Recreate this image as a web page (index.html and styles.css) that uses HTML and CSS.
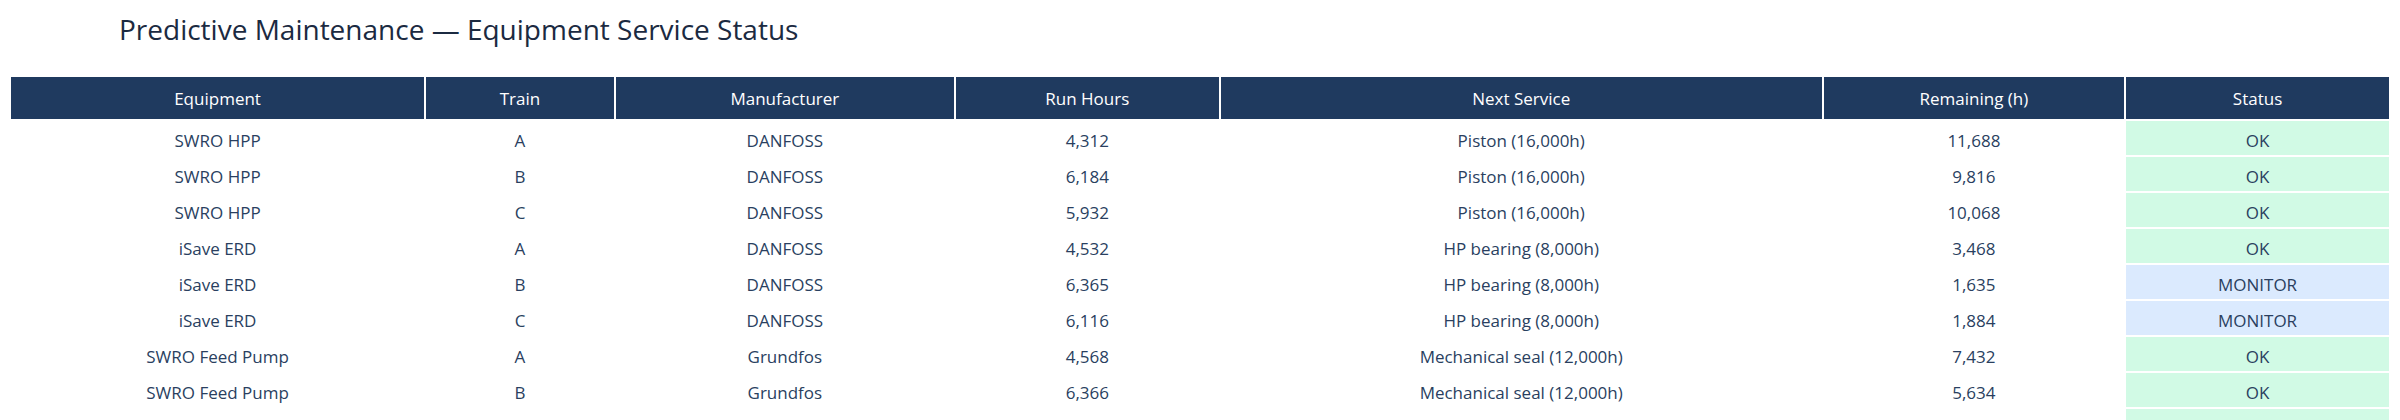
FILE: index.html
```html
<!DOCTYPE html>
<html lang="en">
<head>
<meta charset="utf-8">
<title>Predictive Maintenance — Equipment Service Status</title>
<link rel="stylesheet" href="styles.css">
</head>
<body>
<div class="page">
  <h1 class="title">Predictive Maintenance — Equipment Service Status</h1>
  <div class="table">
    <div class="th">Equipment</div>
    <div class="th">Train</div>
    <div class="th">Manufacturer</div>
    <div class="th">Run Hours</div>
    <div class="th">Next Service</div>
    <div class="th">Remaining (h)</div>
    <div class="th">Status</div>

    <div class="td">SWRO HPP</div><div class="td">A</div><div class="td">DANFOSS</div><div class="td">4,312</div><div class="td">Piston (16,000h)</div><div class="td">11,688</div><div class="td ok">OK</div>
    <div class="td">SWRO HPP</div><div class="td">B</div><div class="td">DANFOSS</div><div class="td">6,184</div><div class="td">Piston (16,000h)</div><div class="td">9,816</div><div class="td ok">OK</div>
    <div class="td">SWRO HPP</div><div class="td">C</div><div class="td">DANFOSS</div><div class="td">5,932</div><div class="td">Piston (16,000h)</div><div class="td">10,068</div><div class="td ok">OK</div>
    <div class="td">iSave ERD</div><div class="td">A</div><div class="td">DANFOSS</div><div class="td">4,532</div><div class="td">HP bearing (8,000h)</div><div class="td">3,468</div><div class="td ok">OK</div>
    <div class="td">iSave ERD</div><div class="td">B</div><div class="td">DANFOSS</div><div class="td">6,365</div><div class="td">HP bearing (8,000h)</div><div class="td">1,635</div><div class="td monitor">MONITOR</div>
    <div class="td">iSave ERD</div><div class="td">C</div><div class="td">DANFOSS</div><div class="td">6,116</div><div class="td">HP bearing (8,000h)</div><div class="td">1,884</div><div class="td monitor">MONITOR</div>
    <div class="td">SWRO Feed Pump</div><div class="td">A</div><div class="td">Grundfos</div><div class="td">4,568</div><div class="td">Mechanical seal (12,000h)</div><div class="td">7,432</div><div class="td ok">OK</div>
    <div class="td">SWRO Feed Pump</div><div class="td">B</div><div class="td">Grundfos</div><div class="td">6,366</div><div class="td">Mechanical seal (12,000h)</div><div class="td">5,634</div><div class="td ok">OK</div>
    <div class="td"></div><div class="td"></div><div class="td"></div><div class="td"></div><div class="td"></div><div class="td"></div><div class="td ok"></div>
  </div>
</div>
</body>
</html>
```

FILE: styles.css
```css
html, body {
  margin: 0;
  padding: 0;
  background: #ffffff;
  overflow: hidden;
  height: 420px;
}

.page {
  font-family: "Open Sans", "Liberation Sans", Arial, sans-serif;
  color: #2a3f5f;
  padding: 0 11px;
  width: 2378px;
  height: 420px;
  overflow: hidden;
}

.title {
  margin: 0;
  padding: 13px 0 0 108px;
  height: 77px;
  box-sizing: border-box;
  font-size: 28px;
  font-weight: 400;
  line-height: 32px;
  color: #1b2a41;
}

.table {
  display: grid;
  grid-template-columns: 2.2fr 1fr 1.8fr 1.4fr 3.2fr 1.6fr 1.4fr;
  grid-auto-rows: 34px;
  grid-template-rows: 42px;
  column-gap: 2px;
  row-gap: 2px;
}

.th {
  background: #1f3a5f;
  color: #ffffff;
  font-size: 17px;
  display: flex;
  align-items: center;
  justify-content: center;
}

.td {
  background: #ffffff;
  font-size: 17px;
  display: flex;
  align-items: center;
  justify-content: center;
  padding-top: 5px;
  box-sizing: border-box;
}

.td.ok {
  background: #d1fae5;
}

.td.monitor {
  background: #dbeafe;
}
```
